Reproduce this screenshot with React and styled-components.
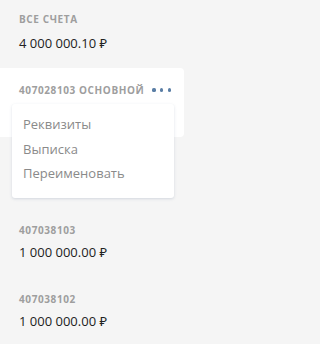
import React from 'react';
import styled, { createGlobalStyle } from 'styled-components';

const accounts = [
  { id: '407038103', amount: '1 000 000.00 ₽' },
  { id: '407038102', amount: '1 000 000.00 ₽' },
];

const menuItems = ['Реквизиты', 'Выписка', 'Переименовать'];

const App = () => {
  return (
    <>
      <GlobalStyle />
      <Page>
        <Summary>
          <Label>Все счета</Label>
          <Amount>4 000 000.10 ₽</Amount>
        </Summary>

        {/* open account with its action menu, the amount is covered by the menu */}
        <OpenSlot>
          <Card>
            <LabelRow>
              <Label>407028103 основной</Label>
              <MoreButton aria-label="Действия">
                <Dot />
                <Dot />
                <Dot />
              </MoreButton>
            </LabelRow>
            <Menu>
              {menuItems.map((item) => (
                <MenuItem key={item}>{item}</MenuItem>
              ))}
            </Menu>
          </Card>
        </OpenSlot>

        {accounts.map((acc) => (
          <Account key={acc.id}>
            <Label>{acc.id}</Label>
            <Amount>{acc.amount}</Amount>
          </Account>
        ))}
      </Page>
    </>
  );
};

export default App;

/* --- STYLED COMPONENTS --- */

const GlobalStyle = createGlobalStyle`
  html, body {
    margin: 0;
    padding: 0;
    background: #f5f5f5;
  }
  body {
    font-family: "Open Sans", "Noto Sans", sans-serif;
  }
`;

const Page = styled.div`
  width: 201px;
  min-height: 344px;
  background: #f5f5f5;
  display: flex;
  flex-direction: column;
`;

const Summary = styled.div`
  display: flex;
  flex-direction: column;
  gap: 9px;
  padding: 12px 19px 0;
  margin-bottom: 17px;
`;

const Label = styled.div`
  font-size: 10px;
  line-height: 14px;
  font-weight: 700;
  letter-spacing: 0.6px;
  text-transform: uppercase;
  color: #9e9e9e;
  white-space: nowrap;
`;

const Amount = styled.div`
  font-size: 13px;
  line-height: 16px;
  color: #222;
  white-space: nowrap;
`;

const Account = styled.div`
  display: flex;
  flex-direction: column;
  gap: 7px;
  padding: 15px 19px 17px;
`;

const OpenSlot = styled.div`
  padding-bottom: 71px;
`;

const Card = styled(Account)`
  position: relative;
  width: 184px;
  height: 69px;
  box-sizing: border-box;
  background: #fff;
  border-radius: 0 4px 4px 0;
  padding-right: 12px;
`;

const LabelRow = styled.div`
  display: flex;
  align-items: center;
  justify-content: space-between;
`;

const MoreButton = styled.button`
  display: flex;
  align-items: center;
  gap: 4.5px;
  padding: 0;
  margin: 0 1px 0 0;
  border: none;
  background: none;
  cursor: pointer;
`;

const Dot = styled.span`
  width: 3.2px;
  height: 3.2px;
  border-radius: 50%;
  background: #5a7ea5;
`;

/* dropdown lies over the open card */
const Menu = styled.ul`
  position: absolute;
  top: 36px;
  left: 12px;
  width: 162px;
  box-sizing: border-box;
  margin: 0;
  padding: 8px 0 12px 11px;
  list-style: none;
  background: #fff;
  border-radius: 3px;
  box-shadow: 0 1px 3px rgba(90, 110, 140, 0.22);
`;

const MenuItem = styled.li`
  font-size: 13px;
  line-height: 24.5px;
  color: #8a8a8a;
  cursor: pointer;
`;
